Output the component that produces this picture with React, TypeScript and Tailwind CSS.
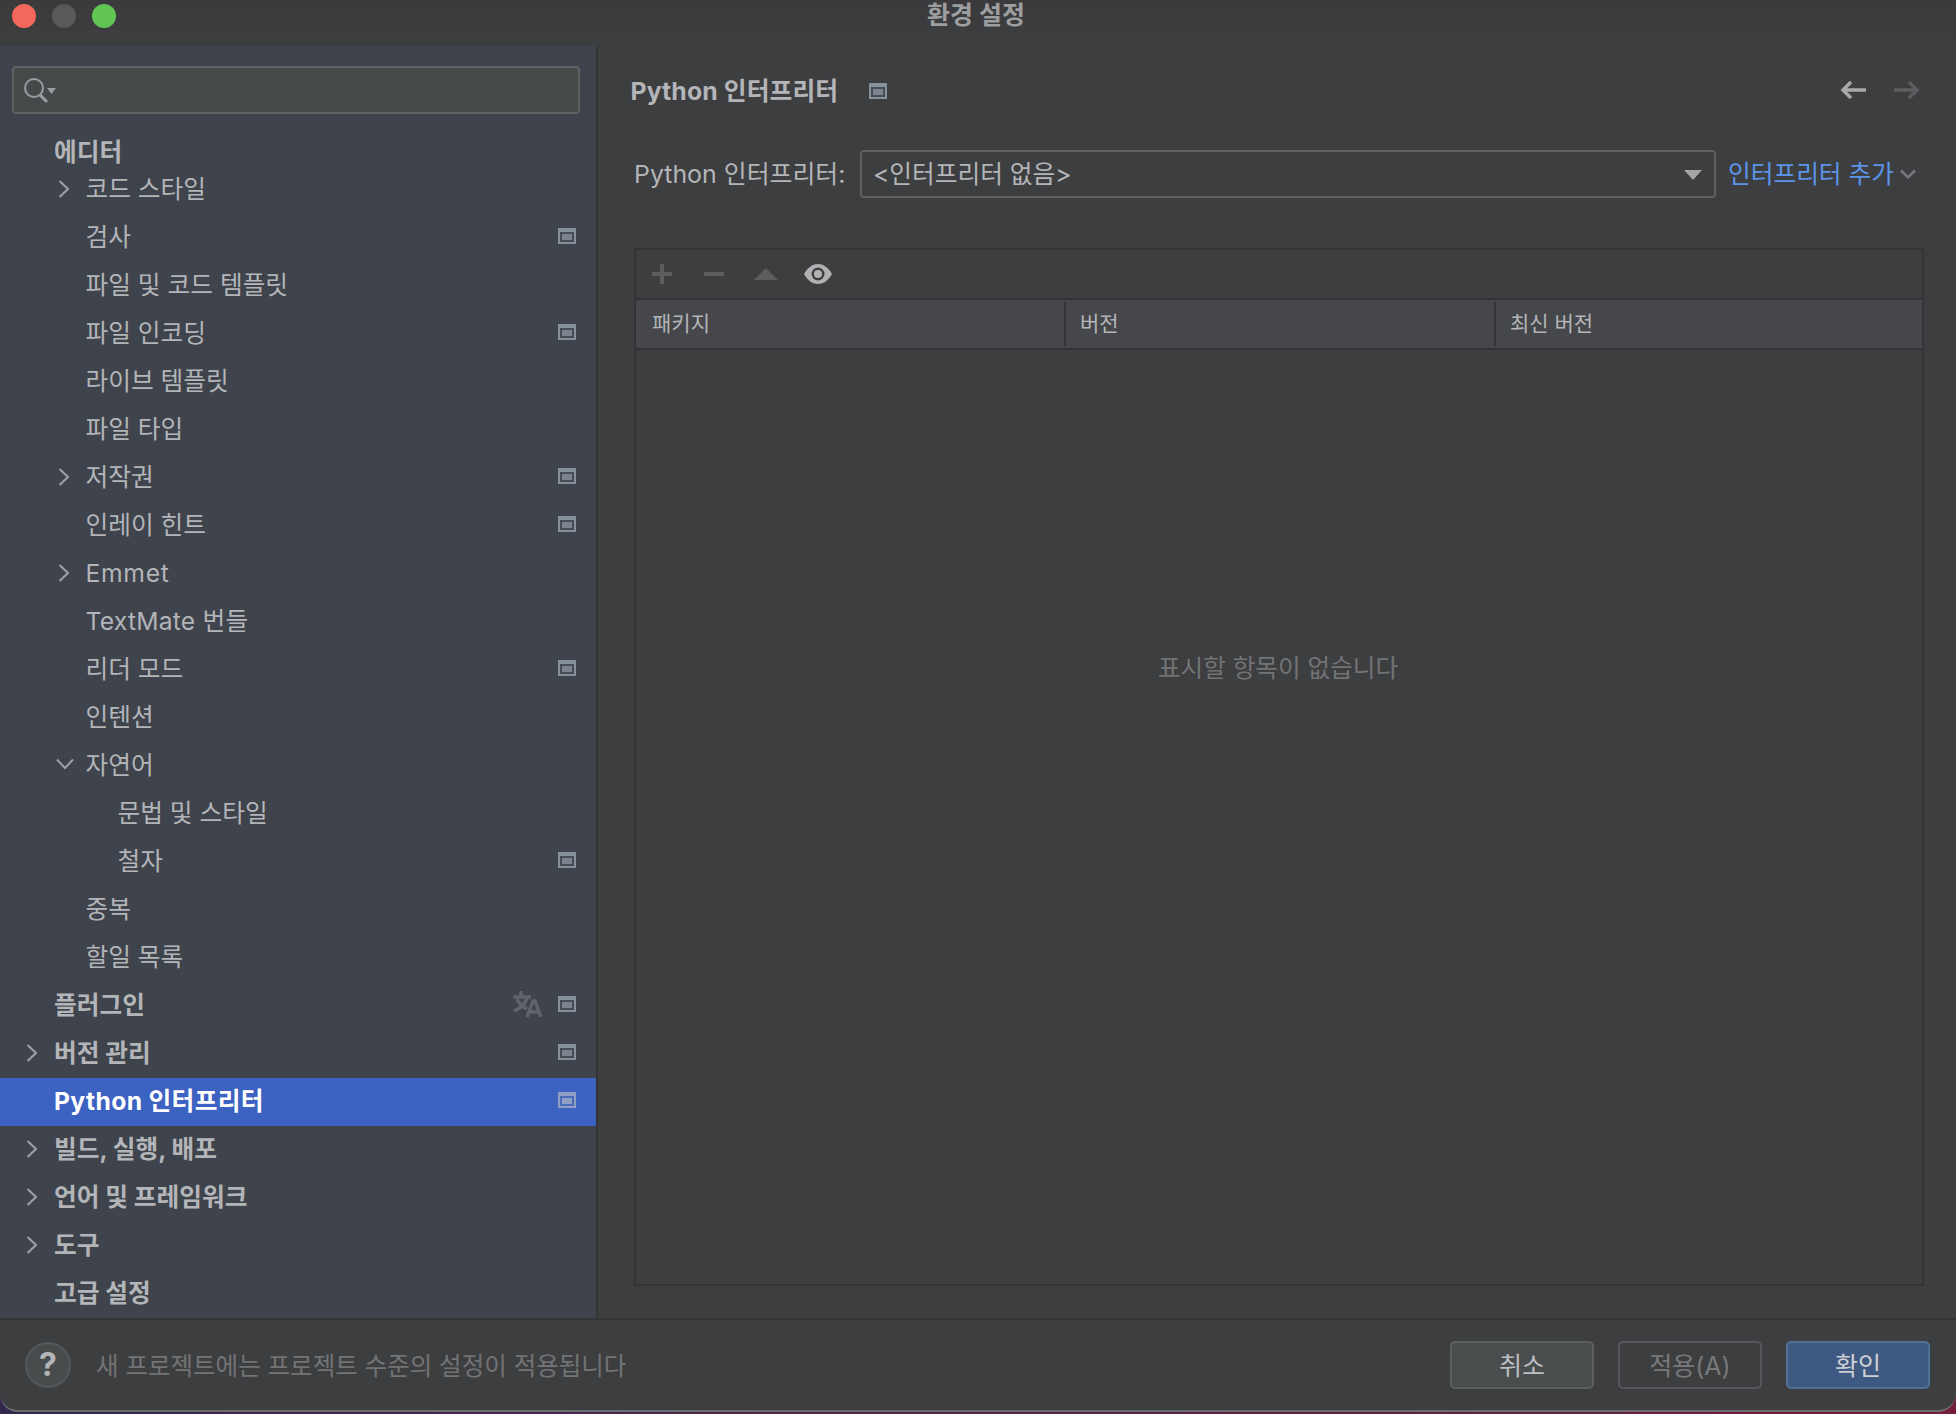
import React from "react";

function ProjIcon({ dim }: { dim?: boolean }) {
  return (
    <svg width="18" height="16" viewBox="0 0 18 16" className="shrink-0 -translate-y-[2px]">
      <rect x="0" y="0" width="18" height="16" fill={dim ? "#8fa0c4" : "#87919c"} />
      <rect x="2" y="4" width="14" height="10" fill={dim ? "#4a6cba" : "#484d55"} />
      <rect x="4" y="6" width="10" height="6" fill={dim ? "#8fa0c4" : "#7b8590"} />
    </svg>
  );
}

function Translate() {
  return (
    <svg width="30" height="28" viewBox="0 0 30 28" className="shrink-0" fill="none" stroke="#5f646c" strokeWidth="3.500">
      <path d="M1 7h18M9 1v6M15 7c-1 6-6 11-13 14M5 9c2 5 6 8 10 10" />
      <path d="M15 27l6-16h2l6 16M18 22h9" />
    </svg>
  );
}

type Row = {
  t: string;
  lvl: number;
  arrow?: "r" | "d";
  bold?: boolean;
  icon?: boolean;
  tr?: boolean;
  sel?: boolean;
  track?: string;
};

const rows: Row[] = [
  { t: "코드 스타일", lvl: 1, arrow: "r" },
  { t: "검사", lvl: 1, icon: true },
  { t: "파일 및 코드 템플릿", lvl: 1 },
  { t: "파일 인코딩", lvl: 1, icon: true },
  { t: "라이브 템플릿", lvl: 1 },
  { t: "파일 타입", lvl: 1 },
  { t: "저작권", lvl: 1, arrow: "r", icon: true },
  { t: "인레이 힌트", lvl: 1, icon: true },
  { t: "Emmet", lvl: 1, arrow: "r", track: "tracking-[0.7px]" },
  { t: "TextMate 번들", lvl: 1, track: "tracking-[0.2px]" },
  { t: "리더 모드", lvl: 1, icon: true },
  { t: "인텐션", lvl: 1 },
  { t: "자연어", lvl: 1, arrow: "d" },
  { t: "문법 및 스타일", lvl: 2 },
  { t: "철자", lvl: 2, icon: true },
  { t: "중복", lvl: 1 },
  { t: "할일 목록", lvl: 1 },
  { t: "플러그인", lvl: 0, bold: true, icon: true, tr: true },
  { t: "버전 관리", lvl: 0, bold: true, arrow: "r", icon: true },
  { t: "Python 인터프리터", lvl: 0, bold: true, icon: true, sel: true, track: "tracking-[0.35px]" },
  { t: "빌드, 실행, 배포", lvl: 0, bold: true, arrow: "r" },
  { t: "언어 및 프레임워크", lvl: 0, bold: true, arrow: "r" },
  { t: "도구", lvl: 0, bold: true, arrow: "r" },
  { t: "고급 설정", lvl: 0, bold: true },
];

function TreeRow({ r }: { r: Row }) {
  const pad = r.lvl === 0 ? "pl-[54px]" : r.lvl === 1 ? "pl-[85.500px]" : "pl-[117.500px]";
  const arrowPos = r.lvl === 0 ? "left-[26px]" : "left-[58px]";
  return (
    <div className={`relative flex h-[48px] shrink-0 items-center pr-[20px] ${pad} ${r.sel ? "bg-[#3c62c2]" : ""}`}>
      {r.arrow === "r" && (
        <svg width="12" height="18" viewBox="0 0 12 18" fill="none" stroke="#9da1a7" strokeWidth="2" className={`absolute top-[14px] ${arrowPos}`}>
          <path d="M1.500 1L10 9l-8.500 8" />
        </svg>
      )}
      {r.arrow === "d" && (
        <svg width="18" height="12" viewBox="0 0 18 12" fill="none" stroke="#9da1a7" strokeWidth="2" className="absolute top-[16px] left-[56px]">
          <path d="M1 1.500L9 10l8-8.500" />
        </svg>
      )}
      <span
        className={`flex-1 -translate-y-[1px] whitespace-nowrap text-[24.7px] leading-[32px] ${r.track ?? ""} ${
          r.sel ? "font-bold text-white" : r.bold ? "font-bold text-[#b3b5b8]" : "text-[#b3b5b8]"
        }`}
      >
        {r.t}
      </span>
      {r.tr && (
        <span className="mr-[16px] -translate-y-[2px]">
          <Translate />
        </span>
      )}
      {r.icon && <ProjIcon dim={r.sel} />}
    </div>
  );
}

export default function App() {
  return (
    <div
      className="h-[1414px] w-[1956px] overflow-hidden bg-gradient-to-r from-[#33264f] to-[#741c3c] text-[#b3b5b8]"
      style={{ fontFamily: 'Inter, "Noto Sans CJK KR", sans-serif' }}
    >
      <div className="flex h-[1412px] flex-col overflow-hidden rounded-b-[18px] border-b-2 border-[#6b6c6e] bg-[#3d3e40]">
        {/* title bar */}
        <div className="relative flex h-[46px] shrink-0 items-center justify-center bg-gradient-to-b from-[#3a3a3c] to-[#3d3e40]">
          <div className="absolute left-[12px] top-[4px] flex gap-[16px]">
            <span className="h-[24px] w-[24px] rounded-full bg-[#f2695c]" />
            <span className="h-[24px] w-[24px] rounded-full bg-[#59595b]" />
            <span className="h-[24px] w-[24px] rounded-full bg-[#61c554]" />
          </div>
          <span className="-ml-[4px] -mt-[16px] text-[25px] font-bold leading-[32px] text-[#9d9e9f]">환경 설정</span>
        </div>

        {/* body */}
        <div className="flex min-h-0 flex-1">
          {/* sidebar */}
          <div className="flex w-[598px] shrink-0 flex-col border-r-2 border-[#333436] bg-[#3e434c]">
            <div className="px-[12px] pb-[16px] pr-[16px] pt-[20px]">
              <div className="flex h-[48px] items-center rounded-[4px] border-2 border-[#5f6062] bg-[#46494a] pl-[10px]">
                <svg width="36" height="30" viewBox="0 0 36 30" fill="none" className="shrink-0">
                  <circle cx="10" cy="13" r="9" stroke="#9a9c9f" strokeWidth="2" />
                  <path d="M16 20l7 7" stroke="#9a9c9f" strokeWidth="3" />
                  <path d="M23 13h9l-4.500 6z" fill="#9a9c9f" />
                </svg>
              </div>
            </div>
            <div className="flex h-[36px] shrink-0 items-center pl-[54px] pt-[7px] text-[24.7px] font-bold leading-[32px] text-[#b3b5b8]">에디터</div>
            {rows.map((r) => (
              <TreeRow key={r.t} r={r} />
            ))}
          </div>

          {/* content */}
          <div className="flex min-w-0 flex-1 flex-col pl-[36px] pr-[32px]">
            <div className="-ml-[3.500px] flex h-[90px] shrink-0 items-center pr-[4px]">
              <span className="text-[24.8px] font-bold leading-[32px] tracking-[0.1px] text-[#b3b5b8]">Python 인터프리터</span>
              <span className="ml-[31px] mt-[4px]">
                <ProjIcon />
              </span>
              <span className="flex-1" />
              <svg width="26" height="18" viewBox="0 0 26 18" fill="none" stroke="#a8a9ab" strokeWidth="3.500" className="mr-[28px] -translate-y-[1px]">
                <path d="M26 9H3M11 1L3 9l8 8" />
              </svg>
              <svg width="26" height="18" viewBox="0 0 26 18" fill="none" stroke="#5c5d5f" strokeWidth="3.500" className="-translate-y-[1px]">
                <path d="M0 9h23M15 1l8 8-8 8" />
              </svg>
            </div>

            <div className="mt-[14px] flex h-[48px] shrink-0 items-center">
              <span className="w-[226px] shrink-0 whitespace-nowrap text-[24.9px] leading-[32px] text-[#b3b5b8]">Python 인터프리터:</span>
              <div className="flex h-[48px] w-[856px] shrink-0 items-center justify-between rounded-[4px] border-2 border-[#5f6062] pl-[11px] pr-[12px]">
                <span className="text-[24.7px] leading-[32px] text-[#b3b5b8]">&lt;인터프리터 없음&gt;</span>
                <svg width="18" height="10" viewBox="0 0 18 10" className="mt-[1px]">
                  <path d="M0 0h18l-9 10z" fill="#a4a5a7" />
                </svg>
              </div>
              <span className="ml-[12px] whitespace-nowrap text-[24.7px] leading-[32px] text-[#5c94e8]">인터프리터 추가</span>
              <svg width="16" height="10" viewBox="0 0 16 10" fill="none" stroke="#75777a" strokeWidth="2.500" className="ml-[6px]">
                <path d="M1 1.500l7 7 7-7" />
              </svg>
            </div>

            {/* table */}
            <div className="mb-[32px] mt-[50px] flex min-h-0 flex-1 flex-col border-2 border-[#333436]">
              <div className="flex h-[50px] shrink-0 items-center border-b-2 border-[#333436] pl-[16px]">
                <svg width="180" height="24" viewBox="0 0 180 24">
                  <path d="M0 10h20v4H0zM8 2h4v20H8z" fill="#5c5d5f" />
                  <path d="M52 10h20v4H52z" fill="#5c5d5f" />
                  <path d="M102 18l12-12 12 12z" fill="#5c5d5f" />
                  <path d="M152 12c4-7 9-10 14-10s10 3 14 10c-4 7-9 10-14 10s-10-3-14-10z" fill="#afb1b3" />
                  <circle cx="166" cy="12" r="6.500" fill="#3d3e40" />
                  <circle cx="166" cy="12" r="4" fill="#afb1b3" />
                </svg>
              </div>
              <div className="flex h-[50px] shrink-0 items-center border-b-2 border-[#333436] bg-[#46474a] text-[21px] leading-[28px] text-[#b3b5b8]">
                <div className="flex h-[44px] w-[430px] items-center border-r-2 border-[#333436] pl-[16px]">패키지</div>
                <div className="flex h-[44px] w-[430px] items-center border-r-2 border-[#333436] pl-[14px]">버전</div>
                <div className="pl-[14px]">최신 버전</div>
              </div>
              <div className="flex flex-1 items-center justify-center pb-[298px] pr-[2px] text-[24.6px] leading-[32px] text-[#727375]">표시할 항목이 없습니다</div>
            </div>
          </div>
        </div>

        {/* footer */}
        <div className="flex h-[92px] shrink-0 items-center border-t-2 border-[#333436] pl-[25px] pr-[26px]">
          <span className="flex h-[46px] w-[46px] shrink-0 items-center justify-center rounded-full border-2 border-[#55585a] bg-[#484b4c] text-[32px] font-bold text-[#b3b5b8]">?</span>
          <span className="ml-[25px] flex-1 translate-y-[1px] whitespace-nowrap text-[24.5px] leading-[32px] text-[#727375]">새 프로젝트에는 프로젝트 수준의 설정이 적용됩니다</span>
          <div className="flex gap-[24px]">
            <div className="flex h-[48px] w-[144px] items-center justify-center rounded-[5px] border-2 border-[#5c5e60] bg-[#4a4d4e] pt-[3px] text-[25px] text-[#bcbec0]">취소</div>
            <div className="flex h-[48px] w-[144px] items-center justify-center rounded-[5px] border-2 border-[#55575a] pt-[3px] text-[25px] text-[#77787a]">적용(A)</div>
            <div className="flex h-[48px] w-[144px] items-center justify-center rounded-[5px] border-2 border-[#4f7196] bg-[#3f5a82] pt-[3px] text-[25px] text-[#cdd0d4]">확인</div>
          </div>
        </div>
      </div>
    </div>
  );
}
